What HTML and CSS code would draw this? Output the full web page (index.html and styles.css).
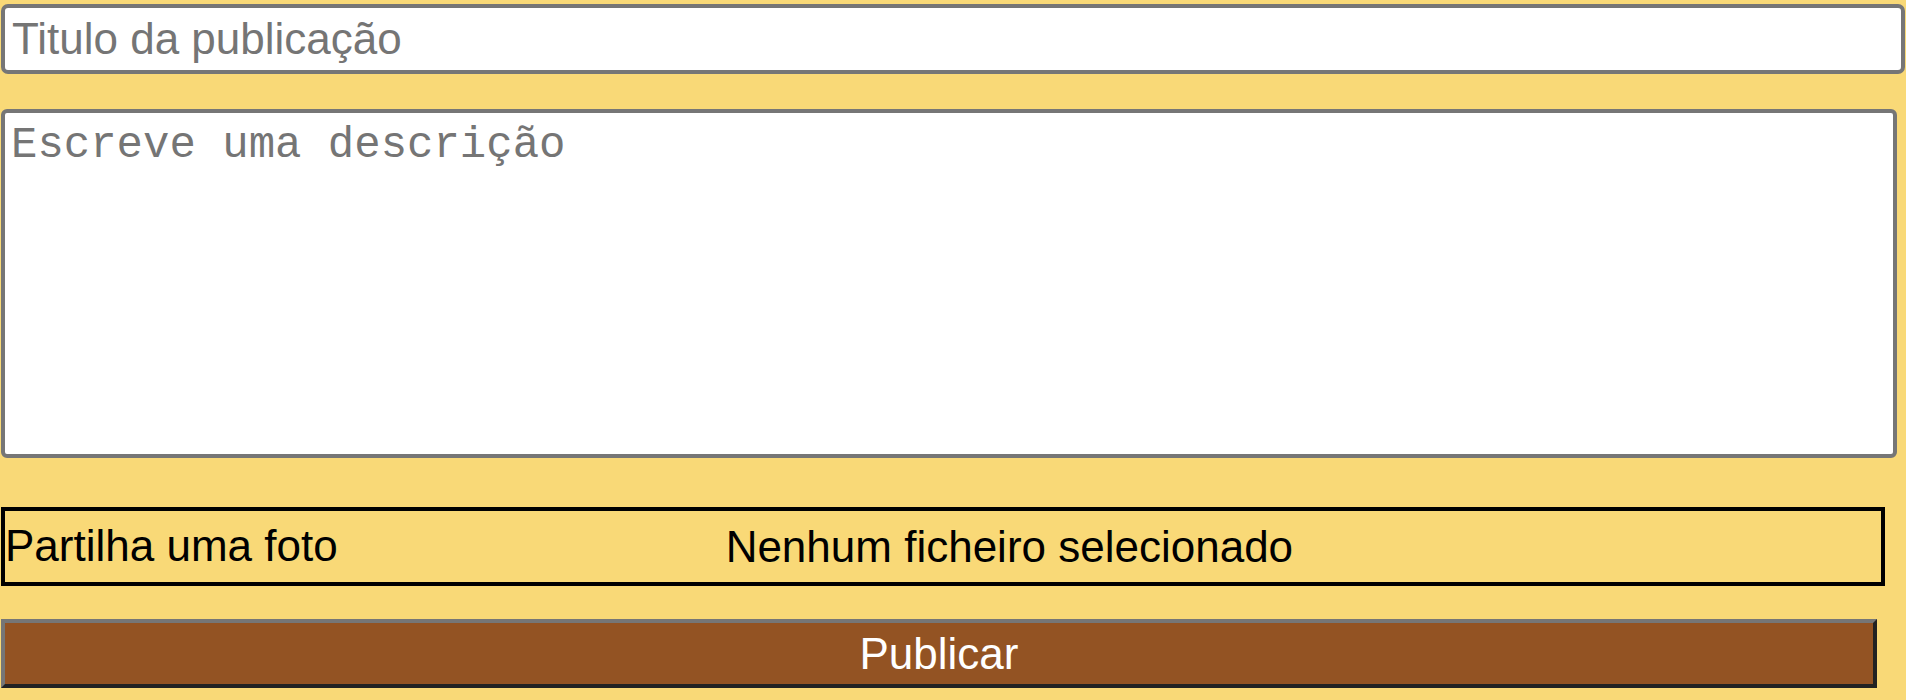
FILE: index.html
```html
<!DOCTYPE html>
<html lang="pt">
<head>
<meta charset="utf-8">
<title>Nova publicação</title>
<link rel="stylesheet" href="styles.css">
</head>
<body>
<form class="post-form">
  <input class="title-input" type="text" placeholder="Titulo da publicação">
  <textarea class="desc-input" placeholder="Escreve uma descrição"></textarea>
  <div class="file-box">
    <label class="file-label">Partilha uma foto</label>
    <span class="file-status">Nenhum ficheiro selecionado</span>
  </div>
  <button class="publish-btn" type="button">Publicar</button>
</form>
</body>
</html>
```

FILE: styles.css
```css
html, body {
  margin: 0;
  background: #f9d977;
}

body {
  padding: 4px 0 0 1px;
  font-family: "Liberation Sans", Arial, sans-serif;
}

.post-form {
  display: flex;
  flex-direction: column;
  align-items: flex-start;
}

.title-input {
  box-sizing: border-box;
  width: 1904px;
  height: 70px;
  margin: 0 0 35px 0;
  padding: 0 7px;
  border: 4px solid #767676;
  border-radius: 7px;
  background: #fff;
  font-family: "Liberation Sans", Arial, sans-serif;
  font-size: 44px;
  color: #000;
  outline: none;
}

.title-input::placeholder {
  color: #757575;
  opacity: 1;
}

.desc-input {
  box-sizing: border-box;
  width: 1896px;
  height: 349px;
  margin: 0 0 49px 0;
  padding: 7px 6px 4px;
  border: 4px solid #767676;
  border-radius: 6px;
  background: #fff;
  font-family: "Liberation Mono", "Courier New", monospace;
  font-size: 44px;
  resize: none;
  outline: none;
}

.desc-input::placeholder {
  color: #757575;
  opacity: 1;
}

.file-box {
  box-sizing: border-box;
  width: 1884px;
  height: 79px;
  margin: 0 0 33px 0;
  border: 4px solid #000;
  display: flex;
  align-items: center;
  font-size: 44px;
  color: #000;
}

.file-label {
  margin-bottom: 2px;
}

.file-status {
  margin-left: 388px;
}

.publish-btn {
  box-sizing: border-box;
  width: 1876px;
  height: 69px;
  padding: 0;
  border-style: solid;
  border-width: 4px;
  border-color: #767676 #222 #222 #767676;
  background: #935323;
  color: #fff;
  font-family: "Liberation Sans", Arial, sans-serif;
  font-size: 44px;
}
```
